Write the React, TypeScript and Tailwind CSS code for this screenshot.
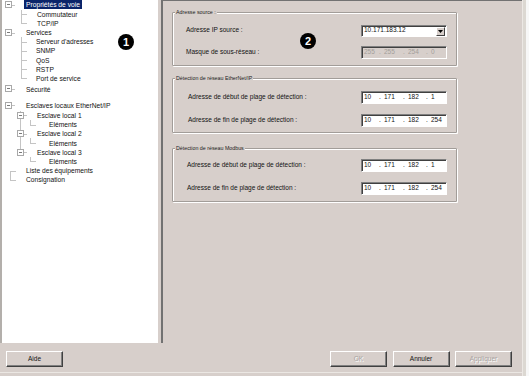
import React from 'react';

type VLine = { x: number; part: 'full' | 'top' | 'bottom' };

interface TreeItem {
  label: string;
  x: number;
  gap?: string;
  exp?: number;
  selected?: boolean;
  v?: VLine[];
  h?: [number, number][];
}

const tree: TreeItem[] = [
  { label: 'Propriétés de voie', x: 26, exp: 5, selected: true, gap: 'mt-[0.4px]' },
  { label: 'Commutateur', x: 37, v: [{ x: 21, part: 'full' }], h: [[21, 27]] },
  { label: 'TCP/IP', x: 37, v: [{ x: 21, part: 'top' }], h: [[21, 27]] },
  { label: 'Services', x: 26, exp: 5 },
  { label: "Serveur d'adresses", x: 36, v: [{ x: 21, part: 'full' }], h: [[21, 27]] },
  { label: 'SNMP', x: 36, v: [{ x: 21, part: 'full' }], h: [[21, 27]] },
  { label: 'QoS', x: 36, v: [{ x: 21, part: 'full' }], h: [[21, 27]] },
  { label: 'RSTP', x: 36, v: [{ x: 21, part: 'full' }], h: [[21, 27]] },
  { label: 'Port de service', x: 36, v: [{ x: 21, part: 'top' }], h: [[21, 27]] },
  { label: 'Sécurité', x: 26, exp: 5, gap: 'mt-[1.4px]' },
  { label: 'Esclaves locaux EtherNet/IP', x: 26, exp: 5, gap: 'mt-[7px]' },
  { label: 'Esclave local 1', x: 37, exp: 17, v: [{ x: 20, part: 'full' }], gap: 'mt-[1px]' },
  { label: 'Eléments', x: 49, v: [{ x: 20, part: 'full' }, { x: 30, part: 'top' }], h: [[30, 36]] },
  { label: 'Esclave local 2', x: 37, exp: 17, v: [{ x: 20, part: 'full' }] },
  { label: 'Eléments', x: 49, v: [{ x: 20, part: 'full' }, { x: 30, part: 'top' }], h: [[30, 36]] },
  { label: 'Esclave local 3', x: 37, exp: 17, v: [{ x: 20, part: 'top' }] },
  { label: 'Eléments', x: 49, v: [{ x: 30, part: 'top' }], h: [[30, 36]] },
  { label: 'Liste des équipements', x: 26, v: [{ x: 10, part: 'bottom' }], h: [[10, 16]] },
  { label: 'Consignation', x: 26, v: [{ x: 10, part: 'top' }], h: [[10, 16]] },
];

const TreeRow: React.FC<{ item: TreeItem }> = ({ item }) => {
  // tree panel has a 2px left border, so page x minus 2
  const px = (x: number) => x - 2;
  return (
    <div className={`relative h-[9.2px] flex items-center ${item.gap ?? ''}`}>
      {item.v?.map((l, i) => (
        <span
          key={'v' + i}
          className={`absolute w-px bg-[#c4c4c4] ${
            l.part === 'full' ? 'top-0 bottom-0' : l.part === 'top' ? 'top-0 h-1/2' : 'top-1/2 bottom-0'
          }`}
          style={{ left: px(l.x) }}
        />
      ))}
      {item.h?.map(([a, b], i) => (
        <span key={'h' + i} className="absolute top-1/2 h-px bg-[#c4c4c4]" style={{ left: px(a), width: b - a }} />
      ))}
      {item.exp !== undefined && (
        <>
          <span className="absolute top-1/2 h-px bg-[#c4c4c4]" style={{ left: px(item.exp + 7), width: 3 }} />
          <span
            className="absolute top-[1px] w-[7px] h-[7px] border border-[#a8a8a8] bg-white flex items-center justify-center"
            style={{ left: px(item.exp) }}
          >
            <span className="w-[3px] h-px bg-[#7a7a7a]" />
          </span>
        </>
      )}
      <span
        className={`relative text-[6.7px] leading-[9px] whitespace-nowrap ${
          item.selected ? 'bg-[#0a246a] text-white px-[2px] h-[9px]' : 'text-[#111]'
        }`}
        style={{ marginLeft: px(item.x) - (item.selected ? 2 : 0) }}
      >
        {item.label}
      </span>
    </div>
  );
};

const IpField: React.FC<{ parts: string[]; disabled?: boolean }> = ({ parts, disabled }) => (
  <div
    className={`w-[86px] h-[13px] border border-t-[#808080] border-l-[#808080] border-b-white border-r-white shadow-[inset_1px_1px_0_#404040] grid grid-cols-[15px_5px_19px_5px_18px_5px_1fr] items-center pl-[2px] text-[6.5px] leading-none ${
      disabled ? 'bg-[#d7cfcb] text-[#a39e9a]' : 'bg-white text-[#111]'
    }`}
  >
    <span>{parts[0]}</span>
    <span>.</span>
    <span>{parts[1]}</span>
    <span>.</span>
    <span>{parts[2]}</span>
    <span>.</span>
    <span>{parts[3]}</span>
  </div>
);

const Combo: React.FC<{ value: string }> = ({ value }) => (
  <div className="w-[86px] h-[12px] border border-t-[#808080] border-l-[#808080] border-b-white border-r-white shadow-[inset_1px_1px_0_#404040] bg-white flex items-center pl-[2px] pr-[1px] text-[6.5px] leading-none text-[#111]">
    <span className="flex-1">{value}</span>
    <span className="w-[9px] h-[9px] mt-[1px] bg-[#d7cfcb] border border-t-white border-l-white border-b-[#404040] border-r-[#404040] flex items-center justify-center">
      <svg width="5" height="3" viewBox="0 0 5 3">
        <path d="M0 0h5L2.5 3z" fill="#000" />
      </svg>
    </span>
  </div>
);

const GroupBox: React.FC<{ title: string; className: string; children: React.ReactNode }> = ({
  title,
  className,
  children,
}) => (
  <div
    className={`relative w-[285px] border border-[#a29d99] rounded-[1px] shadow-[inset_1px_1px_0_#fff,1px_1px_0_#fff] pl-[13px] pr-[9px] flex flex-col ${className}`}
  >
    <span className="absolute -top-[3px] left-[2px] px-[1px] bg-[#d7cfcb] text-[5.3px] leading-[5px] text-[#222] whitespace-nowrap">
      {title}
    </span>
    {children}
  </div>
);

const FieldRow: React.FC<{ label: string; className?: string; children: React.ReactNode }> = ({
  label,
  className,
  children,
}) => (
  <div className={`flex items-center h-[13px] ${className ?? ''}`}>
    <span className="flex-1 text-[6.5px] leading-none text-[#111] whitespace-nowrap">{label}</span>
    {children}
  </div>
);

const WinButton: React.FC<{ label: string; disabled?: boolean }> = ({ label, disabled }) => (
  <div
    className={`w-[57px] h-[16px] border border-t-white border-l-white border-b-[#404040] border-r-[#404040] shadow-[inset_-1px_-1px_0_#808080] flex items-center justify-center text-[6.5px] leading-none ${
      disabled ? 'text-[#a8a39f] [text-shadow:1px_1px_0_#fff]' : 'text-[#111]'
    }`}
  >
    {label}
  </div>
);

const Badge: React.FC<{ n: string; className: string }> = ({ n, className }) => (
  <div
    className={`absolute w-[16px] h-[16px] rounded-full bg-black text-white text-[11px] font-bold flex items-center justify-center leading-none ${className}`}
  >
    {n}
  </div>
);

export default function App() {
  return (
    <div className="relative w-[529px] h-[376px] overflow-hidden bg-[#d7cfcb] flex font-['Liberation_Sans',Arial,sans-serif]">
      <div className="w-[522px] flex flex-col">
        {/* main area */}
        <div className="h-[343px] flex">
          <div className="w-[158px] bg-white border-l-2 border-[#b3afab] flex flex-col">
            {tree.map((item, i) => (
              <TreeRow key={i} item={item} />
            ))}
          </div>
          <div className="w-[3px]" />
          <div className="flex-1 border-l-2 border-t border-[#727272] pl-[9px] flex flex-col">
            <GroupBox title="Adresse source :" className="mt-[11px] h-[54px] pt-[11px]">
              <FieldRow label="Adresse IP source :">
                <Combo value="10.171.183.12" />
              </FieldRow>
              <FieldRow label="Masque de sous-réseau :" className="mt-[8.5px]">
                <IpField parts={['255', '255', '254', '0']} disabled />
              </FieldRow>
            </GroupBox>

            <GroupBox title="Détection de réseau EtherNet/IP" className="mt-[12px] h-[55px] pt-[12px] pl-[15px]">
              <FieldRow label="Adresse de début de plage de détection :">
                <IpField parts={['10', '171', '182', '1']} />
              </FieldRow>
              <FieldRow label="Adresse de fin de plage de détection :" className="mt-[9.5px]">
                <IpField parts={['10', '171', '182', '254']} />
              </FieldRow>
            </GroupBox>

            <GroupBox title="Détection de réseau Modbus" className="mt-[15px] h-[54px] pt-[9.5px] pl-[14px]">
              <FieldRow label="Adresse de début de plage de détection :">
                <IpField parts={['10', '171', '182', '1']} />
              </FieldRow>
              <FieldRow label="Adresse de fin de plage de détection :" className="mt-[10px]">
                <IpField parts={['10', '171', '182', '254']} />
              </FieldRow>
            </GroupBox>
          </div>
        </div>

        {/* bottom bar */}
        <div className="flex-1 flex flex-col">
          <div className="mt-[8px] h-[16px] flex pl-[6px]">
            <WinButton label="Aide" />
            <div className="flex-1" />
            <div className="flex gap-[5.5px] pr-[10px]">
              <WinButton label="OK" disabled />
              <WinButton label="Annuler" />
              <WinButton label="Appliquer" disabled />
            </div>
          </div>
          <div className="mt-[5px] h-px bg-[#ebe7e3]" />
        </div>
      </div>

      {/* right edge of the window */}
      <div className="w-[7px] flex">
        <div className="w-px bg-[#ece8e4]" />
        <div className="w-[3px] bg-[#dcd8d2]" />
        <div className="flex-1 bg-[#f7f7f7]" />
      </div>

      <Badge n="1" className="left-[118px] top-[34px]" />
      <Badge n="2" className="left-[300px] top-[33px]" />
    </div>
  );
}
